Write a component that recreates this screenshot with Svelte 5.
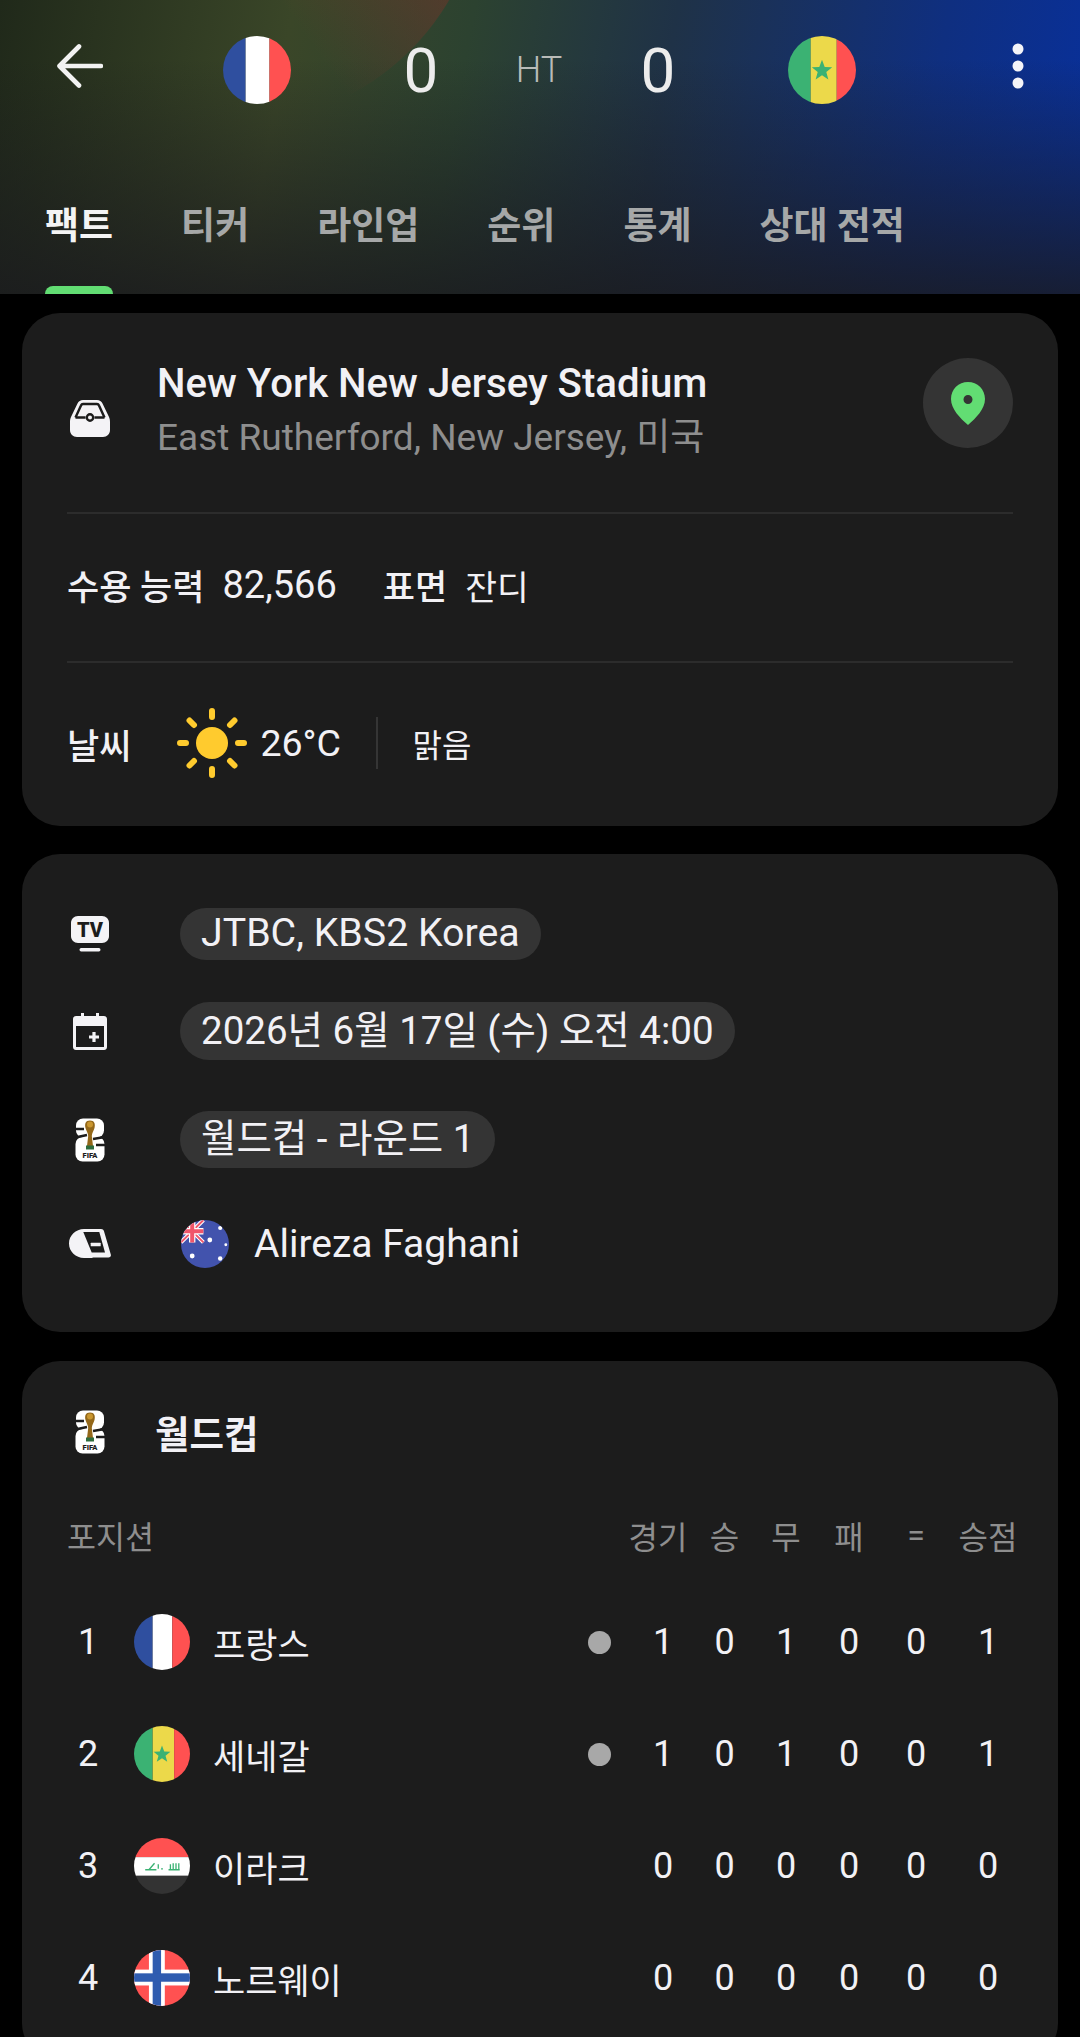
<script>
  const tabs = ['팩트', '티커', '라인업', '순위', '통계', '상대 전적'];
  const heads = ['경기', '승', '무', '패', '=', '승점'];
  const teams = [
    { pos: 1, name: '프랑스', flag: 'fr', live: true, s: [1, 0, 1, 0, 0, 1] },
    { pos: 2, name: '세네갈', flag: 'sn', live: true, s: [1, 0, 1, 0, 0, 1] },
    { pos: 3, name: '이라크', flag: 'iq', live: false, s: [0, 0, 0, 0, 0, 0] },
    { pos: 4, name: '노르웨이', flag: 'no', live: false, s: [0, 0, 0, 0, 0, 0] }
  ];
</script>

{#snippet flag(code, size)}
  <svg class="flag" width={size} height={size} viewBox="0 0 60 60">
    <defs><clipPath id="c-{code}-{size}"><circle cx="30" cy="30" r="30" /></clipPath></defs>
    <g clip-path="url(#c-{code}-{size})">
      {#if code === 'fr'}
        <rect width="20" height="60" fill="#2f4f9f" /><rect x="20" width="21" height="60" fill="#fff" /><rect x="41" width="19" height="60" fill="#ff5151" />
      {:else if code === 'sn'}
        <rect width="20" height="60" fill="#3bb273" /><rect x="20" width="23" height="60" fill="#ecd94a" /><rect x="43" width="17" height="60" fill="#ff5151" />
        <polygon points="30,21 32.4,27.4 39,27.6 33.8,31.8 35.6,38.4 30,34.6 24.4,38.4 26.2,31.8 21,27.6 27.6,27.4" fill="#3bb273" />
      {:else if code === 'iq'}
        <rect width="60" height="20.5" fill="#ff5151" /><rect y="20.5" width="60" height="20" fill="#fff" /><rect y="40.5" width="60" height="20" fill="#333" />
        <path d="M12 34h12M16 34l6-7M26 33v-5M29 33h2M37 34h12M39 34v-6M42 34v-7M45 34v-7M48 34v-7" stroke="#3bb273" stroke-width="1.4" fill="none" />
      {:else if code === 'no'}
        <rect width="60" height="60" fill="#ff5151" />
        <rect x="16" width="17" height="60" fill="#fff" /><rect y="21" width="60" height="17" fill="#fff" />
        <rect x="20" width="9" height="60" fill="#2f5cb0" /><rect y="25" width="60" height="9" fill="#2f5cb0" />
      {:else}
        <rect width="60" height="60" fill="#4253ad" />
        <path d="M0 0L28 28M28 0L0 28" stroke="#fff" stroke-width="5" /><path d="M0 0L28 28M28 0L0 28" stroke="#f0566a" stroke-width="2.400" />
        <path d="M14 0v28M0 14h28" stroke="#fff" stroke-width="8" /><path d="M14 0v28M0 14h28" stroke="#f0566a" stroke-width="5" />
        <circle cx="14" cy="45" r="3" fill="#fff" /><circle cx="49" cy="10" r="2.600" fill="#fff" /><circle cx="36" cy="25" r="3" fill="#fff" /><circle cx="56" cy="31" r="1.800" fill="#fff" /><circle cx="49" cy="48" r="2.800" fill="#fff" />
      {/if}
    </g>
  </svg>
{/snippet}

{#snippet fifa()}
  <svg class="icon" width="30" height="44" viewBox="0 0 30 44">
    <rect x="1" y="0.5" width="28" height="19" rx="7" fill="#fff" />
    <rect x="0.5" y="19" width="29" height="24.500" rx="7" fill="#fff" />
    <path d="M0 11h9M30 27h-9M0 19.500L12 17M30 19L18 21" stroke="#1c1c1c" stroke-width="2.600" />
    <path d="M15 2.500c-4.500 0-5.500 3.500-4.500 7.500.7 3 2.700 5 2.700 8l-1.200 10h6l-1.200-10c0-3 2-5 2.700-8 1-4 0-7.500-4.500-7.500z" fill="#94681a" />
    <circle cx="15" cy="6.500" r="3" fill="#c9962f" />
    <rect x="11" y="27.500" width="8" height="4" fill="#2e6d3e" />
    <text x="15" y="40" text-anchor="middle" class="fifa-text">FIFA</text>
  </svg>
{/snippet}

<div class="page">
  <header class="top">
    <div class="score-row">
      <button class="back" aria-label="뒤로">
        <svg width="46" height="44" viewBox="0 0 46 44" fill="none" stroke="#f2f2f2" stroke-width="4.600" stroke-linecap="round" stroke-linejoin="round"><path d="M22 2.500L2.500 22 22 41.500M3 22h41" /></svg>
      </button>
      <div class="cell">{@render flag('fr', 68)}</div>
      <div class="cell score">0</div>
      <div class="cell ht">HT</div>
      <div class="cell score">0</div>
      <div class="cell">{@render flag('sn', 68)}</div>
      <button class="more" aria-label="더보기">
        <svg width="12" height="46" viewBox="0 0 12 46" fill="#f4f4f8"><ellipse cx="6" cy="6" rx="5.500" ry="5.500" /><ellipse cx="6" cy="23" rx="5.500" ry="5.500" /><ellipse cx="6" cy="40" rx="5.500" ry="5.500" /></svg>
      </button>
    </div>
    <nav class="tabs">
      {#each tabs as t, i}
        <div class="tab" class:active={i === 0}>{t}</div>
      {/each}
    </nav>
  </header>

  <section class="card venue">
    <div class="stadium">
      <svg class="icon" width="40" height="37" viewBox="0 0 40 37">
        <path d="M13 0h14c2.500 0 4.500 1.200 5.500 3.500L39 17c.7 1.500 1 3 1 5v8c0 4-3 7-7 7H7c-4 0-7-3-7-7v-8c0-2 .3-3.500 1-5L7.500 3.500C8.500 1.200 10.500 0 13 0z" fill="#f4f3f6" />
        <path d="M5.500 17.500L11 5.500c.4-1 1-1.500 2-1.500h14c1 0 1.600.5 2 1.500l5.500 12" fill="none" stroke="#1c1c1c" stroke-width="2.400" />
        <path d="M5.500 17.500h10M24.500 17.500h10" stroke="#1c1c1c" stroke-width="2.400" />
        <circle cx="20" cy="17.500" r="3.200" fill="#f4f3f6" stroke="#1c1c1c" stroke-width="2.400" />
      </svg>
      <div class="st-text">
        <div class="st-name">New York New Jersey Stadium</div>
        <div class="st-sub">East Rutherford, New Jersey, 미국</div>
      </div>
      <div class="pin">
        <svg width="34" height="43" viewBox="0 0 34 43"><path fill-rule="evenodd" d="M17 0C7.600 0 0 7.300 0 17c0 10 9 19 17 26 8-7 17-16 17-26C34 7.300 26.400 0 17 0zm0 13a4.500 4.500 0 1 1 0 9 4.500 4.500 0 0 1 0-9z" fill="#62dd73" /></svg>
      </div>
    </div>
    <div class="line"></div>
    <div class="facts">
      <b>수용 능력</b><span class="v1">82,566</span><b class="b2">표면</b><span class="v2">잔디</span>
    </div>
    <div class="line"></div>
    <div class="weather">
      <b>날씨</b>
      <svg class="sun" width="70" height="70" viewBox="0 0 70 70">
        <circle cx="35" cy="35" r="16" fill="#ffcb2e" />
        <g stroke="#ffcb2e" stroke-width="6" stroke-linecap="round">
          <path d="M35 3v6M35 61v6M3 35h6M61 35h6M12.500 12.500l4.500 4.500M53 53l4.500 4.500M12.500 57.500l4.500-4.500M53 17l4.500-4.500" />
        </g>
      </svg>
      <span class="temp">26°C</span>
      <i class="vr"></i>
      <span class="cond">맑음</span>
    </div>
  </section>

  <section class="card info">
    <div class="irow r1">
      <svg class="icon" width="38" height="36" viewBox="0 0 38 36">
        <path d="M7 0h24c4 0 7 3 7 7v13c0 4-3 7-7 7H7c-4 0-7-3-7-7V7c0-4 3-7 7-7z" fill="#f4f3f6" />
        <text x="19" y="20.500" text-anchor="middle" class="tv-text">TV</text>
        <rect x="8.500" y="32" width="21" height="3.400" rx="1.700" fill="#f4f3f6" />
      </svg>
      <span class="pill">JTBC, KBS2 Korea</span>
    </div>
    <div class="irow r2">
      <svg class="icon" width="34" height="37" viewBox="0 0 34 37">
        <path fill-rule="evenodd" d="M8 0h3v3h12V0h3v3h5c1.700 0 3 1.300 3 3v28c0 1.700-1.300 3-3 3H3c-1.700 0-3-1.300-3-3V6c0-1.700 1.300-3 3-3h5V0zM3 13v21h28V13H3z" fill="#f4f3f6" />
        <path d="M21 19v10M16 24h10" stroke="#f4f3f6" stroke-width="3.200" />
      </svg>
      <span class="pill">2026년 6월 17일 (수) 오전 4:00</span>
    </div>
    <div class="irow r3">
      {@render fifa()}
      <span class="pill">월드컵 - 라운드 1</span>
    </div>
    <div class="irow r4">
      <svg class="icon" width="42" height="30" viewBox="0 0 42 30">
        <path d="M15 0h17c1.500 0 2.500.8 3 2.300l6.800 23.200c.5 1.800-.6 3-2.300 3H24l-1 .5H15C6.700 29 0 22.500 0 14.500S6.700 0 15 0z" fill="#f4f3f6" />
        <path d="M14.300 3h16l5.700 20.600H22.700z" fill="#1c1c1c" />
        <rect x="21.700" y="13.700" width="10" height="3.600" rx="0.500" fill="#f4f3f6" />
      </svg>
      <span class="ref-flag">{@render flag('au', 48)}</span>
      <span class="ref">Alireza Faghani</span>
    </div>
  </section>

  <section class="card table">
    <div class="t-title">
      {@render fifa()}
      <b>월드컵</b>
    </div>
    <div class="grid thead">
      <span class="pos-head">포지션</span>
      {#each heads as h}<span class="num">{h}</span>{/each}
    </div>
    {#each teams as t}
      <div class="grid trow">
        <span class="rank">{t.pos}</span>
        <span class="tflag">{@render flag(t.flag, 56)}</span>
        <span class="tname">{t.name}</span>
        <span class="dotcell">{#if t.live}<i class="dot"></i>{/if}</span>
        {#each t.s as v}<span class="num">{v}</span>{/each}
      </div>
    {/each}
  </section>
</div>

<style>
  :global(body) { margin: 0; background: #000; }
  .page {
    width: 1080px; height: 2037px; overflow: hidden; background: #000;
    font-family: Roboto, "Noto Sans CJK KR", sans-serif; color: #f2f1f5;
  }
  .top {
    height: 294px; box-sizing: border-box; position: relative; overflow: hidden;
    background:
      linear-gradient(180deg, rgba(26,26,28,0) 20%, rgba(26,26,30,.82) 100%),
      linear-gradient(100deg, #20291a 0%, #3a4628 26%, #2c4230 42%, #1f3247 60%, #0f2f80 84%, #08309c 100%);
  }
  .top::before {
    content: ""; position: absolute; left: -13px; top: -373px; width: 496px; height: 496px; border-radius: 50%;
    background: linear-gradient(55deg, rgba(140,50,40,0) 45%, rgba(140,48,40,.75) 85%);
  }
  .score-row {
    display: grid; height: 140px; align-items: center; justify-items: center; position: relative;
    grid-template-columns: 178px 158px 170px 66px 172px 156px 180px;
  }
  .cell { display: flex; align-items: center; justify-content: center; }
  .flag { display: block; }
  .back, .more { background: none; border: 0; padding: 0; display: flex; margin-top: -8px; }
  .back { justify-self: start; margin-left: 57px; }
  .more { justify-self: end; margin-right: 56px; }
  .score { font-size: 62px; font-weight: 400; color: #ececec; }
  .ht { font-size: 36px; font-weight: 300; color: #b9bbb8; }
  .tabs { display: flex; gap: 68px; padding-left: 45px; height: 154px; position: relative; }
  .tab {
    font-size: 37px; font-weight: 700; color: #a6a8a8; line-height: 50px; position: relative;
    height: 154px; box-sizing: border-box; padding-top: 62px; white-space: nowrap;
  }
  .tab.active { color: #f4f4f4; }
  .tab.active::after {
    content: ""; position: absolute; left: 0; right: 0; bottom: 0; height: 8px;
    background: #62dd73; border-radius: 8px 8px 0 0;
  }

  .card { background: #1c1c1c; border-radius: 38px; margin: 0 22px; box-sizing: border-box; }
  .icon { display: block; flex: none; }
  .venue { margin-top: 19px; height: 513px; padding: 0 45px; }
  .stadium { display: flex; align-items: center; height: 199px; }
  .stadium .icon { margin: 12px 0 0 3px; }
  .st-text { margin: -3px 0 0 47px; flex: 1; }
  .st-name { font-size: 40.200px; font-weight: 500; line-height: 54px; }
  .st-sub { font-size: 37px; color: #8e8e8e; line-height: 54px; }
  .pin {
    width: 90px; height: 90px; border-radius: 50%; background: #343434;
    display: flex; align-items: center; justify-content: center; margin-top: -19px;
  }
  .line { height: 2px; background: #2c2c2c; }
  .facts { display: flex; align-items: center; height: 147px; padding-bottom: 6px; box-sizing: border-box; font-size: 38px; }
  .facts b, .weather b { font-weight: 500; font-size: 35px; }
  .v1 { margin-left: 18px; }
  .b2 { margin-left: 46px; }
  .v2 { margin-left: 18px; font-size: 34.500px; }
  .weather { display: flex; align-items: center; height: 164px; padding-bottom: 4px; box-sizing: border-box; font-size: 37.500px; }
  .sun { margin-left: 46px; flex: none; }
  .temp { margin-left: 13px; }
  .vr { width: 2.500px; height: 52px; background: #353535; margin-left: 35px; }
  .cond { margin-left: 34px; font-size: 32px; }

  .info { margin-top: 28px; height: 478px; padding: 0 0 0 46px; display: flex; flex-direction: column; }
  .irow { display: flex; align-items: center; position: relative; }
  .irow .icon { position: absolute; }
  .r1 { margin-top: 54px; height: 52px; }
  .r2 { margin-top: 42px; height: 58px; }
  .r3 { margin-top: 51px; height: 57px; }
  .r4 { margin-top: 46px; height: 60px; }
  .r1 .icon { left: 3px; }
  .r2 .icon { left: 5px; }
  .r3 .icon { left: 7px; }
  .r4 .icon { left: 1px; }
  .pill {
    margin-left: 112px; background: #343434; border-radius: 30px; padding: 0 21px;
    font-size: 38.500px; line-height: 1; height: 100%; display: flex; align-items: center;
  }
  .r1 .pill { font-size: 39.300px; }
  .ref-flag { margin-left: 113px; display: block; }
  .ref { margin-left: 25px; font-size: 39px; }

  .table { margin-top: 29px; padding: 0 36px 0 45px; height: 700px; }
  .t-title { display: flex; align-items: center; height: 141px; padding-left: 8px; }
  .t-title b { font-size: 37.500px; font-weight: 700; margin-left: 50px; }
  .grid {
    display: grid; align-items: center; justify-items: center;
    grid-template-columns: 42px 25px 56px 23px 1fr 60px 68px 55px 68px 58px 76px 68px;
  }
  .thead { height: 62px; margin-top: 2px; color: #8e8e8e; font-size: 32px; white-space: nowrap; }
  .pos-head { grid-column: 1 / 7; justify-self: start; font-size: 31.500px; }
  .thead .num:nth-child(2) { transform: translateX(-5px); }
  .trow { height: 112px; font-size: 36px; }
  .thead + .trow { margin-top: 20px; }
  .rank { grid-column: 1; font-size: 36px; }
  .tflag { grid-column: 3; display: block; }
  .tname { grid-column: 5; justify-self: start; font-size: 35px; }
  .dotcell { grid-column: 6; display: flex; }
  .dot { width: 23px; height: 23px; border-radius: 50%; background: #a8a8a8; }
  .num { font-weight: 400; }
  .thead .num { font-size: 32px; }
  .fifa-text { font: 900 7.500px Roboto, sans-serif; fill: #1c1c1c; }
  .tv-text { font: 900 20px Roboto, sans-serif; fill: #1c1c1c; }
</style>
